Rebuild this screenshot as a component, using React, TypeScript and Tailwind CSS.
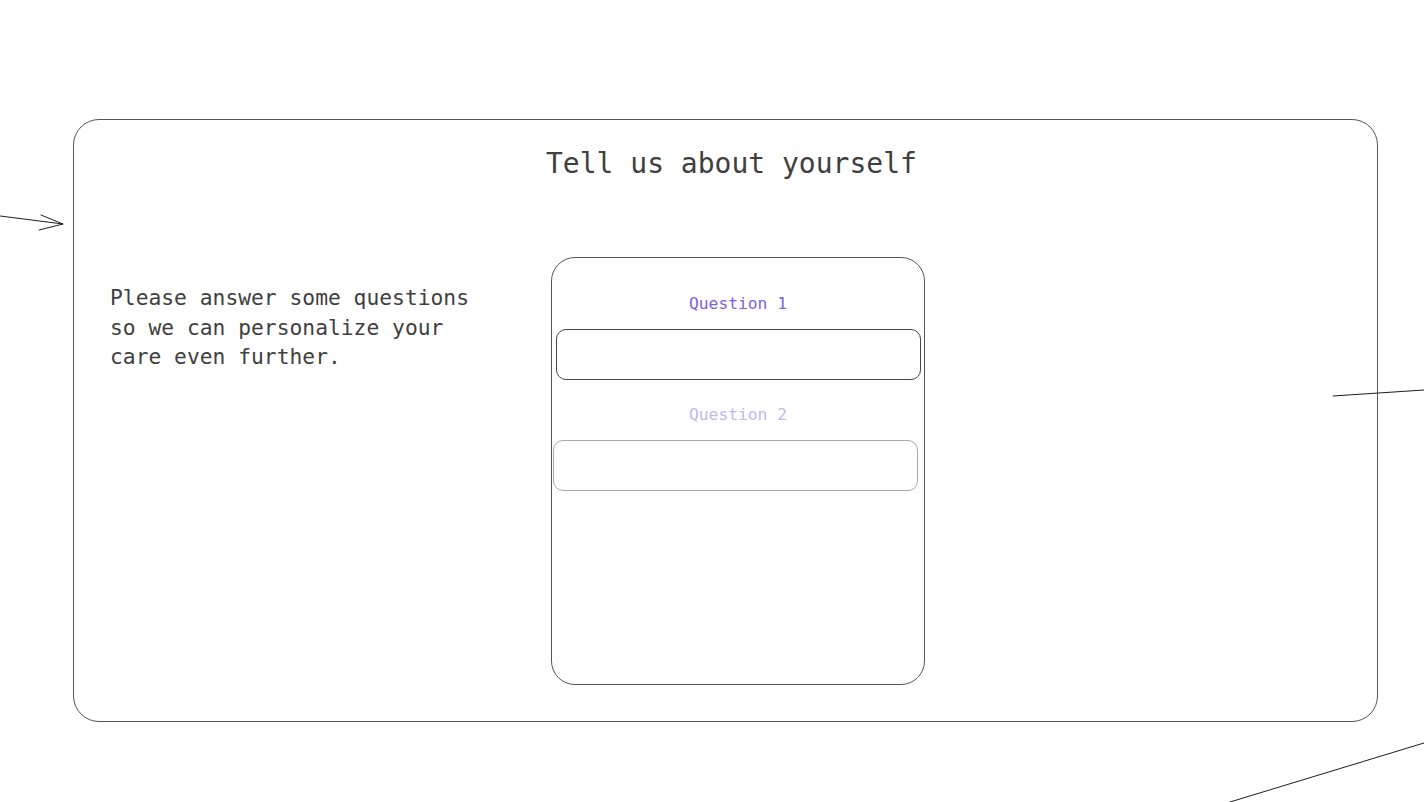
import React from "react";

const mono = "font-['DejaVu_Sans_Mono','Liberation_Mono',monospace]";

const Sketch: React.FC = () => (
    <svg
        className="pointer-events-none absolute inset-0"
        width="1424"
        height="802"
        viewBox="0 0 1424 802"
        fill="none"
        stroke="#1e1e1e"
        strokeWidth="1"
        strokeLinecap="round"
    >
        <path d="M0 216 L63 224" />
        <path d="M41 215 L63 224 L39 230" />
        <path d="M1333 396 L1424 390" />
        <path d="M1230 802 L1424 743" />
    </svg>
);

const QuestionField: React.FC<{ label: string; active?: boolean }> = ({ label, active }) => (
    <div className="flex flex-col">
        <p
            className={`h-[24px] text-center text-[16.3px] leading-[24px] ${active ? "text-[#7d62dd]" : "text-[#c3b6f2]"}`}
        >
            {label}
        </p>
        <div
            className={`mt-[13px] h-[51px] w-[365px] rounded-[10px] border ${active ? "ml-[4px] border-[#444]" : "ml-[1px] border-[#aaa]"}`}
        />
    </div>
);

export default function App() {
    return (
        <div className={`relative h-[802px] w-full overflow-hidden bg-white ${mono}`}>
            <div className="pl-[73px] pt-[119px]">
                <div className="flex h-[603px] w-[1305px] flex-col rounded-[26px] border border-[#555] pt-[24px]">
                    <h1 className="h-[40px] pl-[472px] text-[28px] leading-[40px] text-[#404040]">
                        Tell us about yourself
                    </h1>

                    <div className="mt-[73px] flex">
                        <p className="w-[477px] shrink-0 pl-[36px] pt-[26px] text-[21.3px] leading-[29.5px] text-[#404040]">
                            Please answer some questions
                            <br />
                            so we can personalize your
                            <br />
                            care even further.
                        </p>

                        <div className="flex h-[428px] w-[374px] shrink-0 flex-col gap-[23px] rounded-[24px] border border-[#555] pt-[34px]">
                            <QuestionField label="Question 1" active />
                            <QuestionField label="Question 2" />
                        </div>
                    </div>
                </div>
            </div>
            <Sketch />
        </div>
    );
}
